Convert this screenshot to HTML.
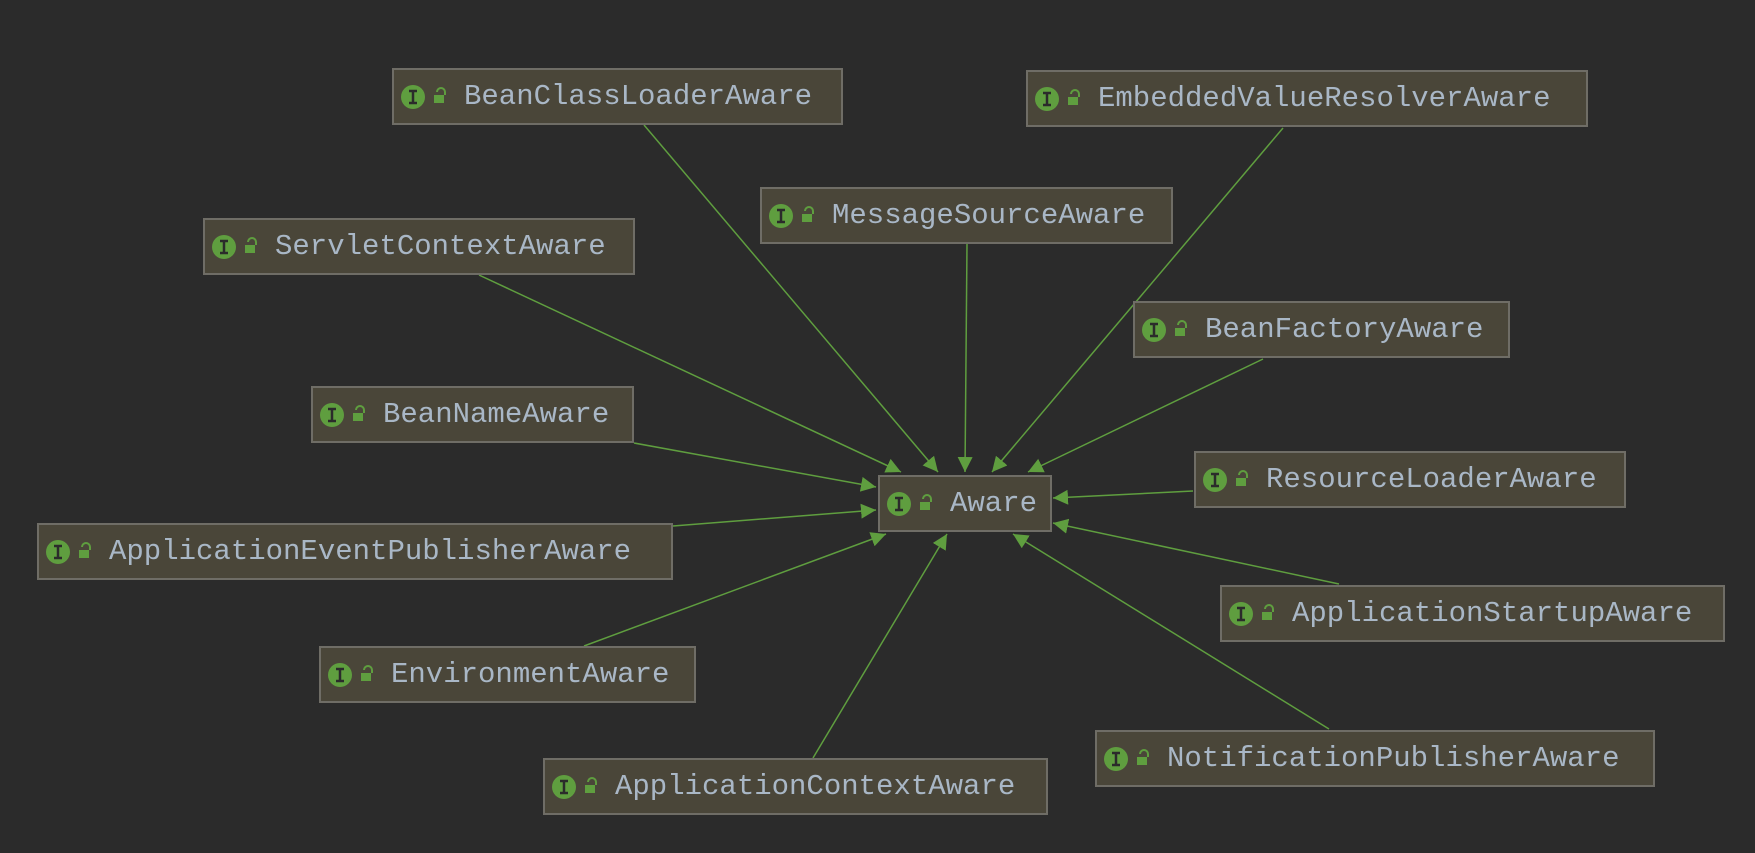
<!DOCTYPE html>
<html><head><meta charset="utf-8"><style>
html,body{margin:0;padding:0;background:#2b2b2b;width:1755px;height:853px;overflow:hidden;position:relative}
.b{position:absolute;box-sizing:border-box;height:57px;background:#4a4639;border:2px solid #6f6d66;}
.b .t{position:absolute;left:70px;top:0;line-height:53px;font-family:"Liberation Mono",monospace;font-size:29px;color:#a9b7c6;white-space:nowrap}
.b svg{position:absolute;left:6px;top:14px}
</style></head><body>
<svg width="1755" height="853" style="position:absolute;left:0;top:0">
<defs><marker id="a" viewBox="0 0 10 10" refX="10" refY="5" markerWidth="15" markerHeight="15" markerUnits="userSpaceOnUse" orient="auto"><path d="M0,0L10,5L0,10z" fill="#5f9e3f"/></marker></defs>
<g stroke="#5f9e3f" stroke-width="1.5" marker-end="url(#a)">
<line x1="644" y1="125" x2="938" y2="472"/>
<line x1="1283" y1="128" x2="992" y2="472"/>
<line x1="967" y1="244" x2="965" y2="472"/>
<line x1="479" y1="275" x2="901" y2="472"/>
<line x1="1263" y1="359" x2="1028" y2="472"/>
<line x1="634" y1="443" x2="876" y2="487"/>
<line x1="1193" y1="491" x2="1053" y2="498"/>
<line x1="673" y1="526" x2="876" y2="510"/>
<line x1="1339" y1="584" x2="1053" y2="523"/>
<line x1="584" y1="646" x2="886" y2="534"/>
<line x1="1329" y1="729" x2="1013" y2="534"/>
<line x1="813" y1="758" x2="947" y2="534"/>
</g></svg>
<div id="boxes"></div>
<script>
var B=[["BeanClassLoaderAware",392,68,451],["EmbeddedValueResolverAware",1026,70,562],["MessageSourceAware",760,187,413],["ServletContextAware",203,218,432],["BeanFactoryAware",1133,301,377],["BeanNameAware",311,386,323],["Aware",878,475,174],["ResourceLoaderAware",1194,451,432],["ApplicationEventPublisherAware",37,523,636],["ApplicationStartupAware",1220,585,505],["EnvironmentAware",319,646,377],["NotificationPublisherAware",1095,730,560],["ApplicationContextAware",543,758,505]];
var ic='<svg width="56" height="26"><circle cx="13" cy="13" r="12" fill="#5f9e3f"/><path d="M9,7h8M9,19h8M13,7v12" stroke="#2b2b2b" stroke-width="2.5"/><path d="M37,8a4,4 0 0 1 8,0v3" fill="none" stroke="#5f9e3f" stroke-width="2"/><rect x="34" y="11" width="10" height="8" fill="#5f9e3f"/></svg>';
var h='';B.forEach(function(b){h+='<div class="b" style="left:'+b[1]+'px;top:'+b[2]+'px;width:'+b[3]+'px">'+ic+'<span class="t">'+b[0]+'</span></div>';});
document.getElementById('boxes').innerHTML=h;
</script>
</body></html>
